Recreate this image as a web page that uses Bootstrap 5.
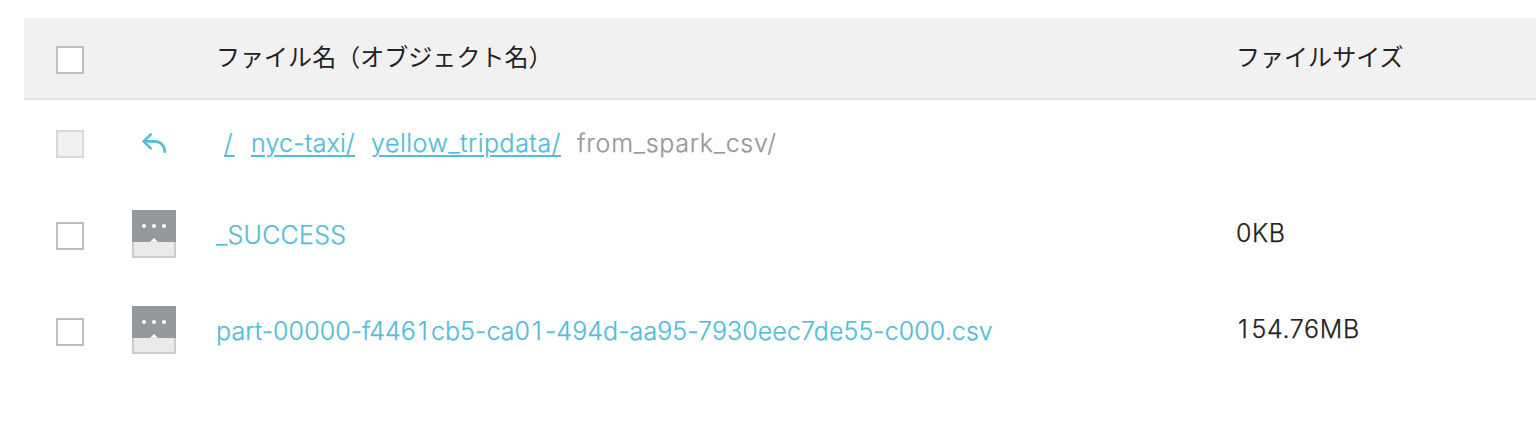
<!DOCTYPE html>
<html lang="ja">
<head>
<meta charset="utf-8">
<meta name="viewport" content="width=device-width, initial-scale=1">
<title>オブジェクト一覧</title>
<link href="https://cdn.jsdelivr.net/npm/bootstrap@5.3.0/dist/css/bootstrap.min.css" rel="stylesheet">
<style>
body{font-family:Inter,"Noto Sans CJK JP",sans-serif;font-size:25px;font-weight:300;-webkit-text-stroke:.25px currentColor;line-height:36px;color:#222;background:#fff;overflow:hidden}
.file-list{margin:18px 0 0 24px}
.list-head{height:82px;background:#f1f1f1;border-bottom:2px solid #e4e4e4;font-family:"Noto Sans CJK JP",sans-serif;font-size:24px;font-weight:400;-webkit-text-stroke:0}
.path-row{height:88px}
.file-row{height:96px}
.col-check{width:108px;padding-left:32px}
.col-icon{width:84px}
.col-name{width:1020px}
.box.form-check-input{width:28px;height:28px;margin:0;border:2px solid #bfbfbf;border-radius:0;background-color:#fff}
.list-head .box.form-check-input{margin-top:4px}
.box.form-check-input:disabled{opacity:1;border-color:#d8d8d8;background-color:#f1f1f1}
.sky,.sky:hover{color:#54bdd9}
.head-text{padding-bottom:5px;letter-spacing:.04px}
.size-text{padding-bottom:6px}
.name-text{padding-bottom:2px}
.crumbs{padding-left:8px;padding-bottom:2px}
.crumbs a{margin-right:16px;text-decoration-thickness:2px;text-underline-offset:3px}
.crumbs .t-root{width:12px;margin-right:15px;letter-spacing:2px}
.t-nyc{letter-spacing:.2px}
.t-yellow{letter-spacing:.5px}
.t-from{letter-spacing:.74px}
.t-success{letter-spacing:.25px}
.t-zero{letter-spacing:.6px}
.t-part{letter-spacing:.08px}
.t-size{letter-spacing:.65px}
.one{margin:0 3px 0 2px}
.muted{color:#999}
</style>
</head>
<body>
<main class="file-list text-nowrap">
  <div class="list-head d-flex align-items-center">
    <div class="col-check d-flex flex-shrink-0"><input class="form-check-input box" type="checkbox" aria-label="すべて選択"></div>
    <div class="col-icon flex-shrink-0"></div>
    <div class="col-name flex-shrink-0 head-text"><span>ファイル名（オブジェクト名）</span></div>
    <div class="head-text"><span>ファイルサイズ</span></div>
  </div>
  <div class="path-row d-flex align-items-center">
    <div class="col-check d-flex flex-shrink-0"><input class="form-check-input box" type="checkbox" disabled aria-label="選択不可"></div>
    <div class="col-icon d-flex flex-shrink-0"><svg width="44" height="32" viewBox="132 128 44 32" fill="none" stroke="#54bdd9" stroke-width="2.6" stroke-linecap="round" stroke-linejoin="round"><path d="M150.7 134.5 143.5 141.4 150.7 148.3M144 141.4H154C160.5 141.4 164.7 145.5 164.7 151.7"/></svg></div>
    <div class="col-name d-flex flex-shrink-0 crumbs">
      <a class="sky t-root" href="#">/</a>
      <a class="sky t-nyc" href="#">nyc-taxi/</a>
      <a class="sky t-yellow" href="#">yellow_tripdata/</a>
      <span class="muted t-from">from_spark_csv/</span>
    </div>
  </div>
  <div class="file-row d-flex align-items-center">
    <div class="col-check d-flex flex-shrink-0"><input class="form-check-input box" type="checkbox" aria-label="_SUCCESS"></div>
    <div class="col-icon d-flex flex-shrink-0 pb-1"><svg width="44" height="48" viewBox="0 0 44 48"><path fill="#ccc" d="M0 31h44v17H0z"/><path fill="#eaeaea" d="M2 31h40v15H2z"/><path fill="#95999c" d="M0 0h44v32H26l-4-4-4 4H0z"/><g fill="#fff"><circle cx="12" cy="16" r="2.1"/><circle cx="22" cy="16" r="2.1"/><circle cx="32" cy="16" r="2.1"/></g></svg></div>
    <div class="col-name flex-shrink-0 name-text"><a class="sky text-decoration-none t-success" href="#">_SUCCESS</a></div>
    <div class="size-text"><span class="t-zero">0KB</span></div>
  </div>
  <div class="file-row d-flex align-items-center">
    <div class="col-check d-flex flex-shrink-0"><input class="form-check-input box" type="checkbox" aria-label="part-00000"></div>
    <div class="col-icon d-flex flex-shrink-0 pb-1"><svg width="44" height="48" viewBox="0 0 44 48"><path fill="#ccc" d="M0 31h44v17H0z"/><path fill="#eaeaea" d="M2 31h40v15H2z"/><path fill="#95999c" d="M0 0h44v32H26l-4-4-4 4H0z"/><g fill="#fff"><circle cx="12" cy="16" r="2.1"/><circle cx="22" cy="16" r="2.1"/><circle cx="32" cy="16" r="2.1"/></g></svg></div>
    <div class="col-name flex-shrink-0 name-text"><a class="sky text-decoration-none t-part" href="#">part-00000-f446<span class="one">1</span>cb5-ca0<span class="one">1</span>-494d-aa95-7930eec7de55-c000.csv</a></div>
    <div class="size-text"><span class="t-size"><span class="one">1</span>54.76MB</span></div>
  </div>
</main>
<script src="https://cdn.jsdelivr.net/npm/bootstrap@5.3.0/dist/js/bootstrap.bundle.min.js"></script>
</body>
</html>
